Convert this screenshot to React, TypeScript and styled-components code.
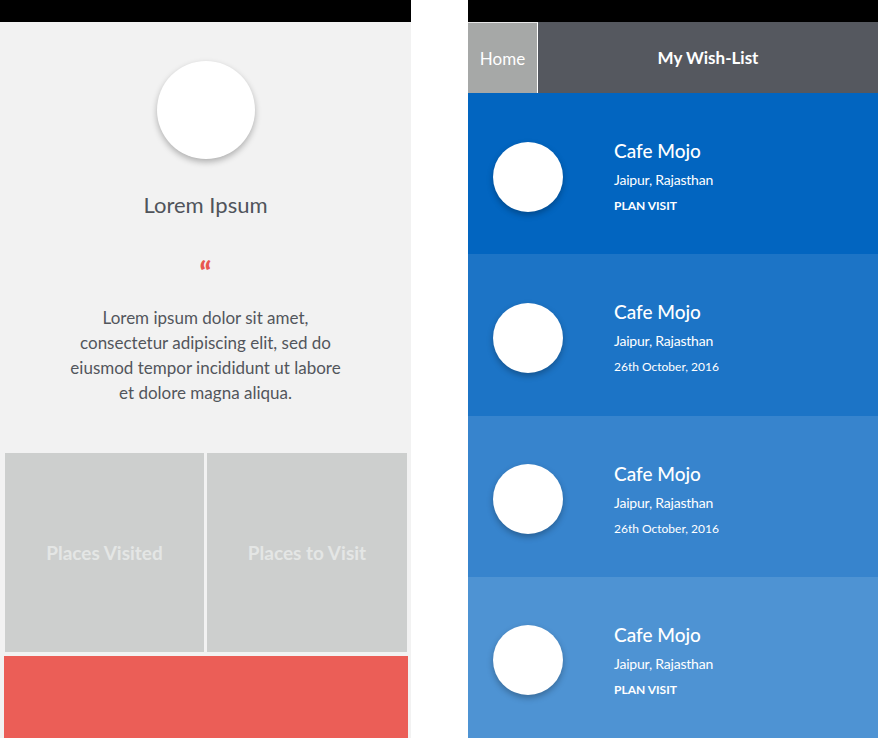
import React from 'react'
import styled, { createGlobalStyle } from 'styled-components'

const GlobalStyle = createGlobalStyle`
  html, body {
    margin: 0;
    padding: 0;
    background: #ffffff;
  }
  body {
    font-family: Lato, 'Open Sans', 'Noto Sans', sans-serif;
    -webkit-font-smoothing: antialiased;
  }
`

const Screen = styled.div`
  display: flex;
  gap: 57px;
  width: 878px;
  height: 738px;
  overflow: hidden;
`

const StatusBar = styled.div`
  height: 22px;
  flex: none;
  background: #000000;
`

// left: profile screen
const ProfilePanel = styled.div`
  width: 411px;
  flex: none;
  display: flex;
  flex-direction: column;
  background: #f2f2f2;
`

const ProfileBody = styled.div`
  display: flex;
  flex-direction: column;
  align-items: center;
  padding-top: 39px;
`

const Avatar = styled.div<{ size: number }>`
  width: ${(p) => p.size}px;
  height: ${(p) => p.size}px;
  border-radius: 50%;
  background: #ffffff;
  flex: none;
  box-shadow: 0 3px 6px rgba(0, 0, 0, 0.28);
`

const ProfileName = styled.h1`
  margin: 32px 0 0;
  font-size: 22px;
  line-height: 28px;
  font-weight: 400;
  color: #50545b;
`

const QuoteMark = styled.div`
  margin-top: 38px;
  height: 20px;
  font-size: 30px;
  line-height: 30px;
  font-weight: 900;
  color: #e8574f;
`

const Bio = styled.p`
  margin: 28px 0 0;
  text-align: center;
  font-size: 17px;
  line-height: 25px;
  color: #52565c;
`

const TileGrid = styled.div`
  display: grid;
  grid-template-columns: 199px 200px;
  gap: 3px;
  margin: 48px 4px 0 5px;
`

const Tile = styled.div`
  height: 199px;
  background: #cdcfce;
  display: flex;
  align-items: center;
  justify-content: center;
  font-size: 19px;
  font-weight: 700;
  color: #e4e6e5;
`

const RedBar = styled.div`
  flex: 1;
  margin: 4px 3px 0 4px;
  background: #eb5e57;
`

// right: wish list screen
const WishPanel = styled.div`
  flex: 1;
  display: flex;
  flex-direction: column;
`

const NavBar = styled.nav`
  height: 71px;
  flex: none;
  display: flex;
  background: #55585f;
`

const NavTab = styled.div<{ active?: boolean }>`
  display: flex;
  align-items: center;
  justify-content: center;
  font-size: 17px;
  color: #ffffff;
  ${(p) =>
    p.active
      ? `
    width: 70px;
    background: #a6a8a7;
    border-top: 1px solid #e6e6e6;
    border-right: 1px solid #ffffff;
    box-sizing: border-box;
    font-weight: 400;
  `
      : `
    flex: 1;
    font-weight: 700;
  `}
`

const WishList = styled.div`
  flex: 1;
  display: flex;
  flex-direction: column;
`

const WishItem = styled.div<{ bg: string }>`
  flex: 1;
  display: flex;
  align-items: center;
  padding: 6px 0 0 25px;
  background: ${(p) => p.bg};
  color: #ffffff;
`

const WishInfo = styled.div`
  margin-left: 51px;
  display: flex;
  flex-direction: column;
`

const PlaceName = styled.div`
  font-size: 19px;
  line-height: 24px;
  font-weight: 500;
`

const PlaceCity = styled.div`
  margin-top: 7px;
  font-size: 14px;
  line-height: 20px;
  letter-spacing: -0.2px;
`

const PlaceMeta = styled.div<{ strong?: boolean }>`
  margin-top: 8px;
  font-size: 12px;
  line-height: 16px;
  font-weight: ${(p) => (p.strong ? 700 : 400)};
`

const wishes = [
  { bg: '#0265c0', meta: 'PLAN VISIT', strong: true },
  { bg: '#1c74c6', meta: '26th October, 2016', strong: false },
  { bg: '#3784cd', meta: '26th October, 2016', strong: false },
  { bg: '#4e93d3', meta: 'PLAN VISIT', strong: true },
]

export default function App() {
  return (
    <Screen>
      <GlobalStyle />
      <ProfilePanel>
        <StatusBar />
        <ProfileBody>
          <Avatar size={98} />
          <ProfileName>Lorem Ipsum</ProfileName>
          <QuoteMark>“</QuoteMark>
          <Bio>
            Lorem ipsum dolor sit amet,
            <br />
            consectetur adipiscing elit, sed do
            <br />
            eiusmod tempor incididunt ut labore
            <br />
            et dolore magna aliqua.
          </Bio>
        </ProfileBody>
        <TileGrid>
          <Tile>Places Visited</Tile>
          <Tile>Places to Visit</Tile>
        </TileGrid>
        <RedBar />
      </ProfilePanel>

      <WishPanel>
        <StatusBar />
        <NavBar>
          <NavTab active>Home</NavTab>
          <NavTab>My Wish-List</NavTab>
        </NavBar>
        <WishList>
          {wishes.map((w, i) => (
            <WishItem key={i} bg={w.bg}>
              <Avatar size={70} />
              <WishInfo>
                <PlaceName>Cafe Mojo</PlaceName>
                <PlaceCity>Jaipur, Rajasthan</PlaceCity>
                <PlaceMeta strong={w.strong}>{w.meta}</PlaceMeta>
              </WishInfo>
            </WishItem>
          ))}
        </WishList>
      </WishPanel>
    </Screen>
  )
}
